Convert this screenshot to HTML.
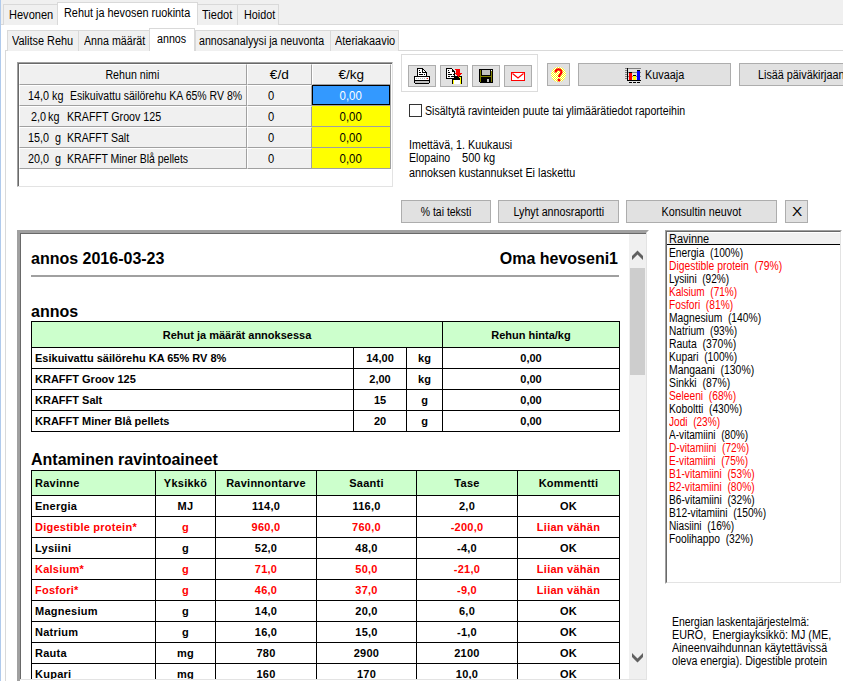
<!DOCTYPE html>
<html><head><meta charset="utf-8">
<style>
*{box-sizing:border-box;margin:0;padding:0}
html,body{width:843px;height:681px;overflow:hidden;background:#fff;font-family:"Liberation Sans",sans-serif;color:#000}
.a{position:absolute}
.u{font-size:12px;line-height:14px;white-space:nowrap}
.u span{display:inline-block;transform-origin:0 0}
.h1{position:absolute;font-weight:bold;font-size:16px;white-space:nowrap;line-height:18px}
table.t{position:absolute;border-collapse:collapse;table-layout:fixed;font-weight:bold;font-size:11px}
table.t td{border:1px solid #000;height:21px;text-align:center;white-space:nowrap;padding:0;overflow:hidden}
table.t td.l{text-align:left;padding-left:3px}
table.t tr.hd td{background:#ccffcc}
table.t tr.r td{color:#ff0000}
svg{position:absolute;shape-rendering:crispEdges}
</style></head><body>
<div id="win" class="a" style="left:0;top:0;width:843px;height:681px;background:#fff;overflow:hidden">
<div class="a" style="left:0px;top:0px;width:843px;height:24px;background:#f0f0f0"></div>
<div class="a" style="left:0px;top:24px;width:843px;height:1px;background:#d9d9d9"></div>
<div class="a" style="left:3px;top:4px;width:55px;height:21px;background:#f0f0f0;border:1px solid #d9d9d9;border-bottom:none"></div>
<div class="a" style="left:197px;top:4px;width:41px;height:21px;background:#f0f0f0;border:1px solid #d9d9d9;border-bottom:none"></div>
<div class="a" style="left:237px;top:4px;width:42px;height:21px;background:#f0f0f0;border:1px solid #d9d9d9;border-bottom:none"></div>
<div class="a" style="left:57px;top:2px;width:141px;height:23px;background:#fff;border:1px solid #d9d9d9;border-bottom:none"></div>
<div class="a u" style="left:9px;top:8px;"><span style="transform:scaleX(0.9198)">Hevonen</span></div>
<div class="a u" style="left:64px;top:6px;"><span style="transform:scaleX(0.9049)">Rehut ja hevosen ruokinta</span></div>
<div class="a u" style="left:202px;top:8px;"><span style="transform:scaleX(0.9175)">Tiedot</span></div>
<div class="a u" style="left:244px;top:8px;"><span style="transform:scaleX(0.8985)">Hoidot</span></div>
<div class="a" style="left:0px;top:0px;width:1px;height:681px;background:#b0caec"></div>
<div class="a" style="left:5px;top:50px;width:838px;height:1px;background:#d9d9d9"></div>
<div class="a" style="left:5px;top:50px;width:1px;height:631px;background:#d9d9d9"></div>
<div class="a" style="left:7px;top:30px;width:72px;height:21px;background:#f0f0f0;border:1px solid #d9d9d9;border-bottom:none"></div>
<div class="a" style="left:78px;top:30px;width:72px;height:21px;background:#f0f0f0;border:1px solid #d9d9d9;border-bottom:none"></div>
<div class="a" style="left:195px;top:30px;width:136px;height:21px;background:#f0f0f0;border:1px solid #d9d9d9;border-bottom:none"></div>
<div class="a" style="left:330px;top:30px;width:69px;height:21px;background:#f0f0f0;border:1px solid #d9d9d9;border-bottom:none"></div>
<div class="a" style="left:149px;top:28px;width:46px;height:23px;background:#fff;border:1px solid #d9d9d9;border-bottom:none"></div>
<div class="a u" style="left:12px;top:34px;"><span style="transform:scaleX(0.9111)">Valitse Rehu</span></div>
<div class="a u" style="left:84px;top:34px;"><span style="transform:scaleX(0.89)">Anna määrät</span></div>
<div class="a u" style="left:157px;top:32px;"><span style="transform:scaleX(0.8916)">annos</span></div>
<div class="a u" style="left:199px;top:34px;"><span style="transform:scaleX(0.8848)">annosanalyysi ja neuvonta</span></div>
<div class="a u" style="left:335px;top:34px;"><span style="transform:scaleX(0.9112)">Ateriakaavio</span></div>
<div class="a" style="left:17px;top:62px;width:376px;height:125px;background:#fff;border-top:1px solid #a0a0a0;border-left:1px solid #a0a0a0;border-right:1px solid #e3e3e3;border-bottom:1px solid #e3e3e3"></div>
<div class="a" style="left:18px;top:63px;width:1px;height:123px;background:#696969"></div>
<div class="a" style="left:18px;top:63px;width:374px;height:1px;background:#696969"></div>
<div class="a" style="left:19px;top:64px;width:228px;height:21px;background:#f0f0f0;border-right:1px solid #a0a0a0;border-bottom:1px solid #a0a0a0;border-top:1px solid #fff;border-left:1px solid #fff"></div>
<div class="a" style="left:247px;top:64px;width:65px;height:21px;background:#f0f0f0;border-right:1px solid #a0a0a0;border-bottom:1px solid #a0a0a0;border-top:1px solid #fff;border-left:1px solid #fff"></div>
<div class="a" style="left:312px;top:64px;width:79px;height:21px;background:#f0f0f0;border-right:1px solid #a0a0a0;border-bottom:1px solid #a0a0a0;border-top:1px solid #fff;border-left:1px solid #fff"></div>
<div class="a" style="left:19px;top:85px;width:228px;height:21px;background:#f0f0f0;border-right:1px solid #a0a0a0;border-bottom:1px solid #a0a0a0;border-top:1px solid #fff;border-left:1px solid #fff"></div>
<div class="a" style="left:247px;top:85px;width:65px;height:21px;background:#f0f0f0;border-right:1px solid #a0a0a0;border-bottom:1px solid #a0a0a0;border-top:1px solid #fff;border-left:1px solid #fff"></div>
<div class="a" style="left:312px;top:85px;width:79px;height:21px;background:#3399ff;border-right:1px solid #a0a0a0;border-bottom:1px solid #a0a0a0"></div>
<div class="a" style="left:312px;top:85px;width:78px;height:20px;border:1px solid #000"></div>
<div class="a" style="left:19px;top:106px;width:228px;height:21px;background:#f0f0f0;border-right:1px solid #a0a0a0;border-bottom:1px solid #a0a0a0;border-top:1px solid #fff;border-left:1px solid #fff"></div>
<div class="a" style="left:247px;top:106px;width:65px;height:21px;background:#f0f0f0;border-right:1px solid #a0a0a0;border-bottom:1px solid #a0a0a0;border-top:1px solid #fff;border-left:1px solid #fff"></div>
<div class="a" style="left:312px;top:106px;width:79px;height:21px;background:#ffff00;border-right:1px solid #a0a0a0;border-bottom:1px solid #a0a0a0"></div>
<div class="a" style="left:19px;top:127px;width:228px;height:21px;background:#f0f0f0;border-right:1px solid #a0a0a0;border-bottom:1px solid #a0a0a0;border-top:1px solid #fff;border-left:1px solid #fff"></div>
<div class="a" style="left:247px;top:127px;width:65px;height:21px;background:#f0f0f0;border-right:1px solid #a0a0a0;border-bottom:1px solid #a0a0a0;border-top:1px solid #fff;border-left:1px solid #fff"></div>
<div class="a" style="left:312px;top:127px;width:79px;height:21px;background:#ffff00;border-right:1px solid #a0a0a0;border-bottom:1px solid #a0a0a0"></div>
<div class="a" style="left:19px;top:148px;width:228px;height:21px;background:#f0f0f0;border-right:1px solid #a0a0a0;border-bottom:1px solid #a0a0a0;border-top:1px solid #fff;border-left:1px solid #fff"></div>
<div class="a" style="left:247px;top:148px;width:65px;height:21px;background:#f0f0f0;border-right:1px solid #a0a0a0;border-bottom:1px solid #a0a0a0;border-top:1px solid #fff;border-left:1px solid #fff"></div>
<div class="a" style="left:312px;top:148px;width:79px;height:21px;background:#ffff00;border-right:1px solid #a0a0a0;border-bottom:1px solid #a0a0a0"></div>
<div class="a u" style="left:19px;top:68px;width:227px;text-align:center;"><span style="transform:scaleX(0.8872);transform-origin:50% 0">Rehun nimi</span></div>
<div class="a u" style="left:247px;top:68px;width:64px;text-align:center;"><span style="transform:scaleX(1.1373);transform-origin:50% 0">€/d</span></div>
<div class="a u" style="left:312px;top:68px;width:78px;text-align:center;"><span style="transform:scaleX(1.1315);transform-origin:50% 0">€/kg</span></div>
<div class="a u" style="left:28px;top:89px;"><span style="transform:scaleX(0.9)">14,0</span></div>
<div class="a u" style="left:52px;top:89px;"><span style="transform:scaleX(0.9)">kg</span></div>
<div class="a u" style="left:70px;top:89px;"><span style="transform:scaleX(0.8757)">Esikuivattu säilörehu KA 65% RV 8%</span></div>
<div class="a u" style="left:268px;top:89px;"><span style="transform:scaleX(0.9281)">0</span></div>
<div class="a u" style="left:312px;top:89px;width:78px;text-align:center;color:#fff"><span style="transform:scaleX(0.952);transform-origin:50% 0">0,00</span></div>
<div class="a u" style="left:31px;top:110px;"><span style="transform:scaleX(0.9)">2,0</span></div>
<div class="a u" style="left:48px;top:110px;"><span style="transform:scaleX(0.9)">kg</span></div>
<div class="a u" style="left:67px;top:110px;"><span style="transform:scaleX(0.8897)">KRAFFT Groov 125</span></div>
<div class="a u" style="left:268px;top:110px;"><span style="transform:scaleX(0.9281)">0</span></div>
<div class="a u" style="left:312px;top:110px;width:78px;text-align:center;"><span style="transform:scaleX(0.952);transform-origin:50% 0">0,00</span></div>
<div class="a u" style="left:28px;top:131px;"><span style="transform:scaleX(0.9)">15,0</span></div>
<div class="a u" style="left:55px;top:131px;"><span style="transform:scaleX(0.9)">g</span></div>
<div class="a u" style="left:67px;top:131px;"><span style="transform:scaleX(0.8819)">KRAFFT Salt</span></div>
<div class="a u" style="left:268px;top:131px;"><span style="transform:scaleX(0.9281)">0</span></div>
<div class="a u" style="left:312px;top:131px;width:78px;text-align:center;"><span style="transform:scaleX(0.952);transform-origin:50% 0">0,00</span></div>
<div class="a u" style="left:28px;top:152px;"><span style="transform:scaleX(0.9)">20,0</span></div>
<div class="a u" style="left:55px;top:152px;"><span style="transform:scaleX(0.9)">g</span></div>
<div class="a u" style="left:67px;top:152px;"><span style="transform:scaleX(0.8746)">KRAFFT Miner Blå pellets</span></div>
<div class="a u" style="left:268px;top:152px;"><span style="transform:scaleX(0.9281)">0</span></div>
<div class="a u" style="left:312px;top:152px;width:78px;text-align:center;"><span style="transform:scaleX(0.952);transform-origin:50% 0">0,00</span></div>
<div class="a" style="left:401px;top:54px;width:137px;height:38px;border:1px solid #dcdcdc"></div>
<div class="a" style="left:408px;top:65px;width:28px;height:22px;background:#e1e1e1;border:1px solid #adadad"></div>
<div class="a" style="left:440px;top:65px;width:28px;height:22px;background:#e1e1e1;border:1px solid #adadad"></div>
<div class="a" style="left:472px;top:65px;width:28px;height:22px;background:#e1e1e1;border:1px solid #adadad"></div>
<div class="a" style="left:504px;top:65px;width:28px;height:22px;background:#e1e1e1;border:1px solid #adadad"></div>
<div class="a" style="left:547px;top:63px;width:23px;height:23px;background:#e1e1e1;border:1px solid #adadad"></div>
<div class="a" style="left:578px;top:63px;width:153px;height:23px;background:#e1e1e1;border:1px solid #adadad"></div>
<div class="a" style="left:739px;top:63px;width:122px;height:23px;background:#e1e1e1;border:1px solid #adadad"></div>
<svg style="left:408px;top:65px" width="28" height="22">
 <path d="M9 3h6v1h1v1h1v1h1v1h1v5h-10z" fill="#000"/>
 <rect x="10" y="4" width="4" height="7" fill="#fff"/><rect x="14" y="8" width="4" height="3" fill="#fff"/>
 <rect x="15" y="5" width="1" height="2" fill="#fff"/><rect x="16" y="6" width="1" height="1" fill="#fff"/>
 <rect x="11" y="5" width="1" height="1" fill="#000"/>
 <rect x="11" y="7" width="2" height="1" fill="#000"/>
 <rect x="11" y="9" width="4" height="1" fill="#000"/><rect x="16" y="9" width="1" height="1" fill="#000"/>
 <rect x="6" y="11" width="16" height="8" fill="#000"/>
 <rect x="7" y="12" width="14" height="3" fill="#fff"/>
 <path d="M8 13h1v1h-1zM10 13h1v1h-1zM12 13h1v1h-1zM14 13h1v1h-1zM16 13h1v1h-1zM18 13h1v1h-1z" fill="#c0c0c0"/>
 <rect x="19" y="13" width="1" height="1" fill="#ff0000"/>
 <rect x="7" y="16" width="14" height="2" fill="#c0c0c0"/>
 <rect x="6" y="18" width="1" height="1" fill="#e1e1e1"/><rect x="21" y="18" width="1" height="1" fill="#e1e1e1"/>
</svg>
<svg style="left:440px;top:65px" width="28" height="22">
 <rect x="12" y="11" width="10" height="8" fill="#000"/>
 <rect x="13" y="15" width="1" height="4" fill="#ffff00"/><rect x="20" y="12" width="1" height="7" fill="#ffff00"/>
 <rect x="14" y="15" width="6" height="4" fill="#fff"/>
 <rect x="19" y="12" width="1" height="1" fill="#ffff00"/>
 <path d="M6 3h6v1h1v1h1v1h1v8h-9z" fill="#000"/>
 <path d="M7 4h5v2h1v1h1v6h-7z" fill="#fff"/>
 <rect x="12" y="5" width="1" height="2" fill="#000"/><rect x="13" y="6" width="1" height="1" fill="#000"/>
 <rect x="8" y="5" width="1" height="1" fill="#000"/><rect x="8" y="7" width="2" height="1" fill="#000"/>
 <rect x="8" y="9" width="4" height="1" fill="#000"/><rect x="13" y="9" width="1" height="1" fill="#000"/>
 <rect x="8" y="11" width="2" height="1" fill="#000"/><rect x="11" y="11" width="3" height="1" fill="#000"/>
 <path d="M14 4h6v4h2v1h-1v1h-1v1h-1v1h-1v-1h-1v-1h-1v-1h-1v-1h1v-3h-1z" fill="#ff0000"/>
</svg>
<svg style="left:472px;top:65px" width="28" height="22">
 <rect x="7" y="4" width="14" height="14" fill="#000"/>
 <rect x="8" y="5" width="1" height="12" fill="#808000"/><rect x="19" y="6" width="1" height="11" fill="#808000"/>
 <rect x="9" y="11" width="10" height="1" fill="#808000"/>
 <rect x="10" y="5" width="8" height="5" fill="#c0c0c0"/>
 <rect x="19" y="5" width="1" height="1" fill="#fff"/>
 <rect x="15" y="14" width="2" height="3" fill="#c0c0c0"/>
 <rect x="7" y="17" width="1" height="1" fill="#e1e1e1"/>
</svg>
<svg style="left:504px;top:65px" width="28" height="22">
 <rect x="7" y="7" width="14" height="9" fill="#ff0000"/>
 <rect x="8" y="8" width="12" height="7" fill="#fff"/>
 <path d="M8.5 8.5 L14 13 L19.5 8.5" fill="none" stroke="#ff0000" stroke-width="1.2" style="shape-rendering:auto"/>
</svg>
<svg style="left:547px;top:63px;shape-rendering:auto" width="23" height="23">
 <defs><pattern id="dith" width="2" height="2" patternUnits="userSpaceOnUse"><rect width="1" height="1" fill="#ffff00"/><rect x="1" y="1" width="1" height="1" fill="#ffff00"/><rect x="1" width="1" height="1" fill="#fff"/><rect y="1" width="1" height="1" fill="#fff"/></pattern></defs>
 <circle cx="11.5" cy="11.5" r="7.5" fill="url(#dith)"/>
 <path d="M8.5 9.5 C8.5 5.5 14.5 5.5 14.5 9 C14.5 11 12 11.5 12 14" fill="none" stroke="#ff0000" stroke-width="2.2"/>
 <circle cx="12" cy="17" r="1.5" fill="#ff0000"/>
</svg>
<svg style="left:622px;top:64px" width="22" height="22">
 <rect x="3" y="4" width="16" height="1" fill="#808080"/>
 <rect x="3" y="8" width="16" height="1" fill="#808080"/>
 <rect x="3" y="12" width="16" height="1" fill="#808080"/>
 <path d="M3 6h2v1h-2zM3 10h2v1h-2zM3 14h2v1h-2z" fill="#808080"/>
 <rect x="5" y="4" width="1" height="13" fill="#000"/>
 <rect x="5" y="16" width="14" height="1" fill="#000"/>
 <rect x="7" y="8" width="3" height="1" fill="#000"/><rect x="7" y="9" width="3" height="7" fill="#ff0000"/>
 <rect x="11" y="11" width="3" height="1" fill="#000"/><rect x="11" y="12" width="3" height="4" fill="#ffff00"/>
 <rect x="15" y="6" width="3" height="1" fill="#000"/><rect x="15" y="7" width="3" height="9" fill="#0000ff"/>
 <path d="M7 18h3v1h-3zM11 18h3v1h-3zM15 18h3v1h-3z" fill="#000"/>
</svg>

<div class="a u" style="left:645px;top:68px;"><span style="transform:scaleX(0.9031)">Kuvaaja</span></div>
<div class="a u" style="left:758px;top:68px;"><span style="transform:scaleX(0.9)">Lisää päiväkirjaan</span></div>
<div class="a" style="left:409px;top:104px;width:13px;height:13px;background:#fff;border:1px solid #333"></div>
<div class="a u" style="left:425px;top:104px;"><span style="transform:scaleX(0.8823)">Sisältytä ravinteiden puute tai ylimäärätiedot raporteihin</span></div>
<div class="a u" style="left:409px;top:138px;"><span style="transform:scaleX(0.8939)">Imettävä, 1. Kuukausi</span></div>
<div class="a u" style="left:409px;top:151px;"><span style="transform:scaleX(0.8807)">Elopaino</span></div>
<div class="a u" style="left:462px;top:151px;"><span style="transform:scaleX(0.9214)">500 kg</span></div>
<div class="a u" style="left:409px;top:166px;"><span style="transform:scaleX(0.8993)">annoksen kustannukset Ei laskettu</span></div>
<div class="a" style="left:401px;top:200px;width:90px;height:23px;background:#e1e1e1;border:1px solid #adadad"></div>
<div class="a u" style="left:401px;top:205px;width:90px;text-align:center;"><span style="transform:scaleX(0.8708);transform-origin:50% 0">% tai teksti</span></div>
<div class="a" style="left:498px;top:200px;width:121px;height:23px;background:#e1e1e1;border:1px solid #adadad"></div>
<div class="a u" style="left:498px;top:205px;width:121px;text-align:center;"><span style="transform:scaleX(0.8921);transform-origin:50% 0">Lyhyt annosraportti</span></div>
<div class="a" style="left:626px;top:200px;width:151px;height:23px;background:#e1e1e1;border:1px solid #adadad"></div>
<div class="a u" style="left:626px;top:205px;width:151px;text-align:center;"><span style="transform:scaleX(0.8978);transform-origin:50% 0">Konsultin neuvot</span></div>
<div class="a" style="left:785px;top:200px;width:23px;height:23px;background:#e1e1e1;border:1px solid #adadad"></div>
<div class="a u" style="left:786px;top:205px;width:23px;text-align:center;"><span style="transform:scaleX(1.2806);transform-origin:50% 0">X</span></div>
<div class="a" style="left:17px;top:230px;width:632px;height:451px;background:#a0a0a0;clip-path:polygon(0 0,632px 0,629px 3px,3px 3px,3px 451px,0 451px)"></div>
<div class="a" style="left:20px;top:233px;width:627px;height:1px;background:#696969"></div>
<div class="a" style="left:20px;top:233px;width:1px;height:447px;background:#696969"></div>
<div class="a" style="left:646px;top:233px;width:1px;height:447px;background:#e3e3e3"></div>
<div class="a" style="left:20px;top:679px;width:627px;height:1px;background:#e3e3e3"></div>
<div id="doc" class="a" style="left:21px;top:234px;width:608px;height:445px;background:#fff;overflow:hidden">
  <div class="h1" style="left:10px;top:16px">annos 2016-03-23</div>
  <div class="h1" style="right:11px;top:16px">Oma hevoseni1</div>
  <div class="a" style="left:10px;top:41px;width:588px;height:2px;background:#a0a0a0"></div>
  <div class="h1" style="left:10px;top:69px">annos</div>
  <table class="t" style="left:10px;top:87px;width:588px">
   <colgroup><col style="width:322px"><col style="width:53px"><col style="width:36px"><col style="width:177px"></colgroup>
   <tr class="hd" style="height:26px"><td colspan="3">Rehut ja määrät annoksessa</td><td>Rehun hinta/kg</td></tr>
   <tr><td class="l">Esikuivattu säilörehu KA 65% RV 8%</td><td>14,00</td><td>kg</td><td>0,00</td></tr>
   <tr><td class="l">KRAFFT Groov 125</td><td>2,00</td><td>kg</td><td>0,00</td></tr>
   <tr><td class="l">KRAFFT Salt</td><td>15</td><td>g</td><td>0,00</td></tr>
   <tr><td class="l">KRAFFT Miner Blå pellets</td><td>20</td><td>g</td><td>0,00</td></tr>
  </table>
  <div class="h1" style="left:10px;top:217px">Antaminen ravintoaineet</div>
  <table class="t" style="left:10px;top:236px;width:588px;letter-spacing:0.25px">
   <colgroup><col style="width:124px"><col style="width:60px"><col style="width:101px"><col style="width:100px"><col style="width:101px"><col style="width:102px"></colgroup>
   <tr class="hd" style="height:25px"><td class="l">Ravinne</td><td>Yksikkö</td><td>Ravinnontarve</td><td>Saanti</td><td>Tase</td><td>Kommentti</td></tr>
   <tr class=""><td class="l">Energia</td><td>MJ</td><td>114,0</td><td>116,0</td><td>2,0</td><td>OK</td></tr><tr class="r"><td class="l">Digestible protein*</td><td>g</td><td>960,0</td><td>760,0</td><td>-200,0</td><td>Liian vähän</td></tr><tr class=""><td class="l">Lysiini</td><td>g</td><td>52,0</td><td>48,0</td><td>-4,0</td><td>OK</td></tr><tr class="r"><td class="l">Kalsium*</td><td>g</td><td>71,0</td><td>50,0</td><td>-21,0</td><td>Liian vähän</td></tr><tr class="r"><td class="l">Fosfori*</td><td>g</td><td>46,0</td><td>37,0</td><td>-9,0</td><td>Liian vähän</td></tr><tr class=""><td class="l">Magnesium</td><td>g</td><td>14,0</td><td>20,0</td><td>6,0</td><td>OK</td></tr><tr class=""><td class="l">Natrium</td><td>g</td><td>16,0</td><td>15,0</td><td>-1,0</td><td>OK</td></tr><tr class=""><td class="l">Rauta</td><td>mg</td><td>780</td><td>2900</td><td>2100</td><td>OK</td></tr><tr class=""><td class="l">Kupari</td><td>mg</td><td>160</td><td>170</td><td>10,0</td><td>OK</td></tr>
  </table>
</div>
<div class="a" style="left:629px;top:234px;width:17px;height:445px;background:#f0f0f0"></div>
<div class="a" style="left:630px;top:268px;width:15px;height:107px;background:#cdcdcd"></div>
<svg style="left:629px;top:249px;shape-rendering:auto" width="17" height="14"><path d="M3 11 L8.5 5.5 L14 11 L14 7 L8.5 1.5 L3 7 Z" fill="#606060"/></svg>
<svg style="left:629px;top:650px;shape-rendering:auto" width="17" height="14"><path d="M3 3 L8.5 8.5 L14 3 L14 7 L8.5 12.5 L3 7 Z" fill="#606060"/></svg>
<div class="a" style="left:665px;top:230px;width:177px;height:354px;background:#fff;border-top:1px solid #a0a0a0;border-left:1px solid #a0a0a0;border-right:1px solid #fff;border-bottom:1px solid #fff"></div>
<div class="a" style="left:666px;top:231px;width:175px;height:352px;border-top:1px solid #696969;border-left:1px solid #696969;border-right:1px solid #e3e3e3;border-bottom:1px solid #e3e3e3"></div>
<div class="a" style="left:667px;top:232px;width:173px;height:12px;background:#f0f0f0;border-top:1px solid #fff;border-left:1px solid #fff"></div>
<div class="a" style="left:667px;top:244px;width:173px;height:1px;background:#000"></div>
<div class="a u" style="left:669px;top:232px;"><span style="transform:scaleX(0.9127)">Ravinne</span></div>
<div class="a u" style="left:669px;top:246px;"><span style="transform:scaleX(0.8546)">Energia &nbsp;(100%)</span></div>
<div class="a u" style="left:669px;top:259px;color:#ff0000"><span style="transform:scaleX(0.8608)">Digestible protein &nbsp;(79%)</span></div>
<div class="a u" style="left:669px;top:272px;"><span style="transform:scaleX(0.8395)">Lysiini &nbsp;(92%)</span></div>
<div class="a u" style="left:669px;top:285px;color:#ff0000"><span style="transform:scaleX(0.8369)">Kalsium &nbsp;(71%)</span></div>
<div class="a u" style="left:669px;top:298px;color:#ff0000"><span style="transform:scaleX(0.8507)">Fosfori &nbsp;(81%)</span></div>
<div class="a u" style="left:669px;top:311px;"><span style="transform:scaleX(0.8578)">Magnesium &nbsp;(140%)</span></div>
<div class="a u" style="left:669px;top:324px;"><span style="transform:scaleX(0.844)">Natrium &nbsp;(93%)</span></div>
<div class="a u" style="left:669px;top:337px;"><span style="transform:scaleX(0.8676)">Rauta &nbsp;(370%)</span></div>
<div class="a u" style="left:669px;top:350px;"><span style="transform:scaleX(0.8508)">Kupari &nbsp;(100%)</span></div>
<div class="a u" style="left:669px;top:363px;"><span style="transform:scaleX(0.8681)">Mangaani &nbsp;(130%)</span></div>
<div class="a u" style="left:669px;top:376px;"><span style="transform:scaleX(0.8647)">Sinkki &nbsp;(87%)</span></div>
<div class="a u" style="left:669px;top:389px;color:#ff0000"><span style="transform:scaleX(0.8525)">Seleeni &nbsp;(68%)</span></div>
<div class="a u" style="left:669px;top:402px;"><span style="transform:scaleX(0.8562)">Koboltti &nbsp;(430%)</span></div>
<div class="a u" style="left:669px;top:415px;color:#ff0000"><span style="transform:scaleX(0.8417)">Jodi &nbsp;(23%)</span></div>
<div class="a u" style="left:669px;top:428px;"><span style="transform:scaleX(0.8411)">A-vitamiini &nbsp;(80%)</span></div>
<div class="a u" style="left:669px;top:441px;color:#ff0000"><span style="transform:scaleX(0.8459)">D-vitamiini &nbsp;(72%)</span></div>
<div class="a u" style="left:669px;top:454px;color:#ff0000"><span style="transform:scaleX(0.8411)">E-vitamiini &nbsp;(75%)</span></div>
<div class="a u" style="left:669px;top:467px;color:#ff0000"><span style="transform:scaleX(0.8501)">B1-vitamiini &nbsp;(53%)</span></div>
<div class="a u" style="left:669px;top:480px;color:#ff0000"><span style="transform:scaleX(0.8501)">B2-vitamiini &nbsp;(80%)</span></div>
<div class="a u" style="left:669px;top:493px;"><span style="transform:scaleX(0.8501)">B6-vitamiini &nbsp;(32%)</span></div>
<div class="a u" style="left:669px;top:506px;"><span style="transform:scaleX(0.8515)">B12-vitamiini &nbsp;(150%)</span></div>
<div class="a u" style="left:669px;top:519px;"><span style="transform:scaleX(0.8414)">Niasiini &nbsp;(16%)</span></div>
<div class="a u" style="left:669px;top:532px;"><span style="transform:scaleX(0.8578)">Foolihappo &nbsp;(32%)</span></div>
<div class="a u" style="left:672px;top:615px;"><span style="transform:scaleX(0.8711)">Energian laskentajärjestelmä:</span></div>
<div class="a u" style="left:672px;top:628px;"><span style="transform:scaleX(0.9008)">EURO,&nbsp; Energiayksikkö: MJ (ME,</span></div>
<div class="a u" style="left:672px;top:641px;"><span style="transform:scaleX(0.9015)">Aineenvaihdunnan käytettävissä</span></div>
<div class="a u" style="left:672px;top:654px;"><span style="transform:scaleX(0.8844)">oleva energia). Digestible protein</span></div>
</div>
</body></html>
